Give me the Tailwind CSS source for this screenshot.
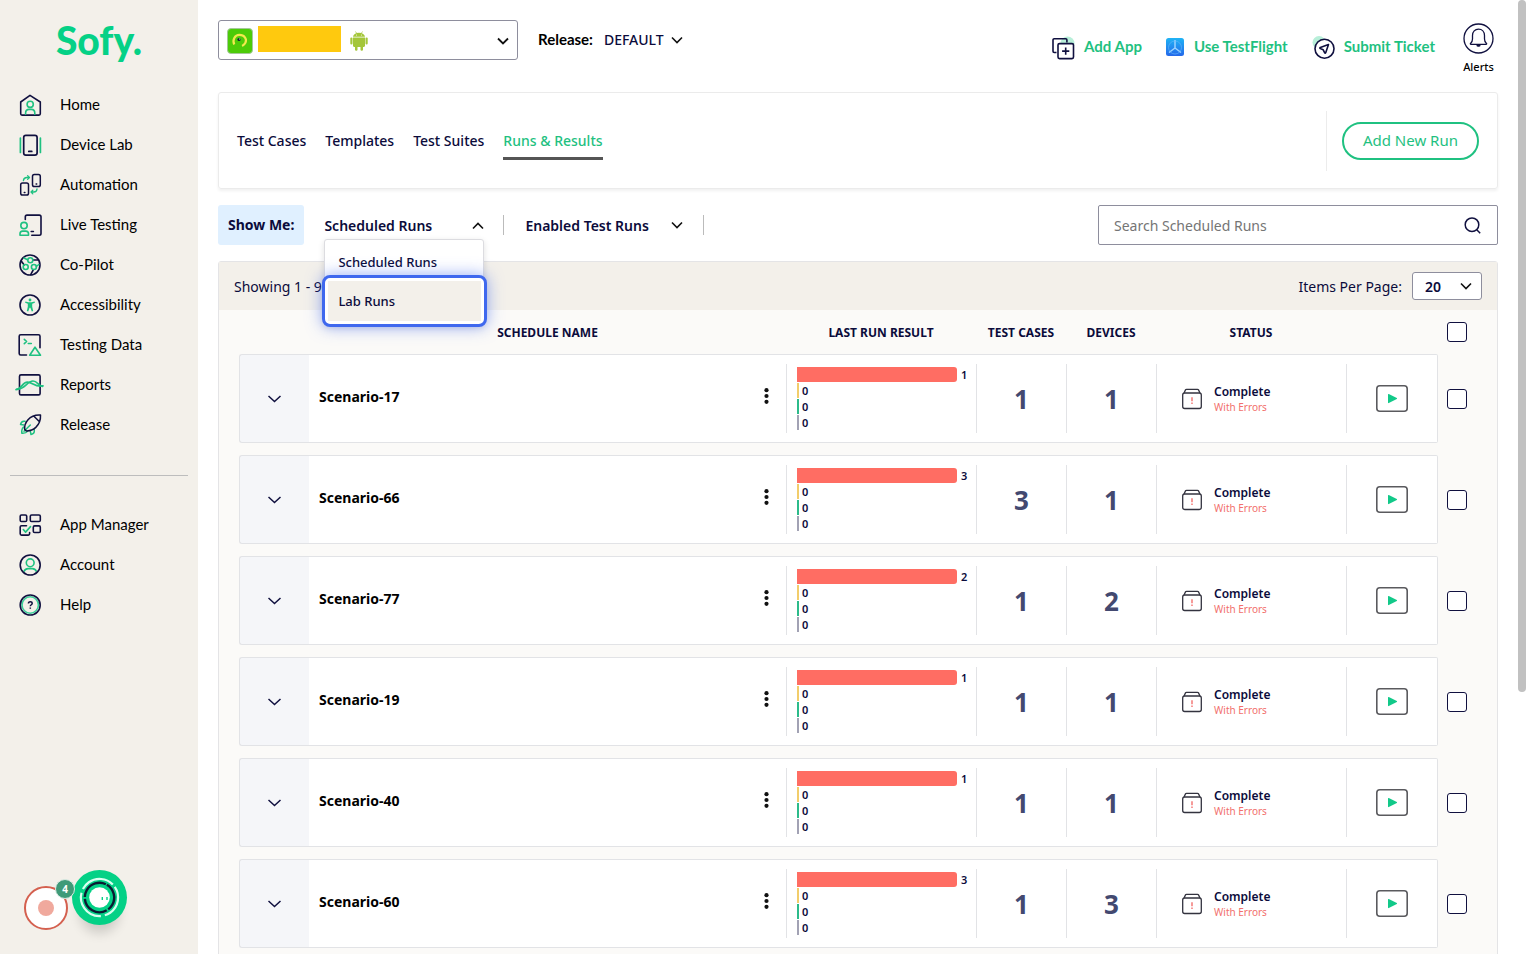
<!DOCTYPE html>
<html lang="en">
<head>
  <meta charset="UTF-8">
  <meta name="viewport" content="width=device-width, initial-scale=1.0">
  <title>Sofy - Runs &amp; Results</title>
  <script src="https://cdn.jsdelivr.net/npm/@tailwindcss/browser@4"></script>
</head>
<body class="flex h-screen overflow-hidden bg-white font-['Noto_Sans',sans-serif] text-sm text-[#0b0b3b]">

  <!-- Sidebar -->
  <aside class="relative w-[198px] shrink-0 bg-[#f3f0ea] font-['Lato',sans-serif] text-[15px] text-black">
    <a href="#" class="flex h-[85px] items-center justify-center pb-1 text-[39px] leading-none font-black text-[#04d186]">Sofy.</a>
    <nav>
      <a href="#" class="flex h-10 items-center gap-[15px] pl-[15px]">
        <svg class="size-[30px]" viewBox="0 0 30 30" fill="none" stroke="#10103f" stroke-width="1.6" stroke-linecap="round" stroke-linejoin="round"><path d="M15 5.3 5.7 12v11.8c0 .8.5 1.3 1.3 1.3h17c.8 0 1.3-.5 1.3-1.3V12z"/><g stroke="#1fc181"><circle cx="15.2" cy="14.3" r="3.1"/><path d="M10.6 24.3v-1.2c0-2.2 1.5-3.7 3.4-3.7h2.4c2 0 3.4 1.5 3.4 3.7v1.2"/></g></svg>
        <span>Home</span>
      </a>
      <a href="#" class="flex h-10 items-center gap-[15px] pl-[15px]">
        <svg class="size-[30px]" viewBox="0 0 30 30" fill="none" stroke="#10103f" stroke-width="1.7" stroke-linecap="round"><rect x="8.7" y="5.4" width="13.4" height="19.8" rx="2.2"/><path d="M13.8 21.4h3"/><path d="M5.4 8v14.500M25.4 8v14.500" stroke="#1fc181"/></svg>
        <span>Device Lab</span>
      </a>
      <a href="#" class="flex h-10 items-center gap-[15px] pl-[15px]">
        <svg class="size-[30px]" viewBox="0 0 30 30" fill="none" stroke="#10103f" stroke-width="1.5" stroke-linecap="round" stroke-linejoin="round"><rect x="5.7" y="12.9" width="7.8" height="12.2" rx="1.8"/><rect x="17.5" y="4.6" width="7.8" height="12" rx="1.8"/><path d="M9.300 22.5h.6M21.1 14h.6"/><g stroke="#1fc181" stroke-width="1.3"><path d="M8.4 10.6c.2-2 1.600-3.100 3.400-3.100h2.400M12.6 5.600l1.900 1.900-1.900 1.900M22 19c-.1 2-1.500 3-3.200 3h-2.600M17.8 20.2 16 22l1.800 1.900"/></g></svg>
        <span>Automation</span>
      </a>
      <a href="#" class="flex h-10 items-center gap-[15px] pl-[15px]">
        <svg class="size-[30px]" viewBox="0 0 30 30" fill="none" stroke="#10103f" stroke-width="1.6" stroke-linecap="round" stroke-linejoin="round"><path d="M10.3 9.500V6.800c0-1 .6-1.700 1.700-1.700h12.300c1 0 1.700.6 1.700 1.700v16.700c0 1-.6 1.700-1.700 1.700h-7.500M16.200 21.500h2.200"/><g stroke="#1fc181"><circle cx="9" cy="15.6" r="3.2"/><path d="M5 25.200v-1.400c0-1.600 1-2.700 2.600-2.700h3.200c1.600 0 2.700 1.100 2.700 2.700v1.400z"/></g></svg>
        <span>Live Testing</span>
      </a>
      <a href="#" class="flex h-10 items-center gap-[15px] pl-[15px]">
        <svg class="size-[30px]" viewBox="0 0 30 30" fill="none" stroke="#10103f" stroke-width="1.6" stroke-linecap="round"><circle cx="15" cy="15" r="10"/><path d="M18 10h5.500M6.600 11.500l2.600 3.500M18.200 20l-2.500 4.600"/><g stroke="#1fc181"><circle cx="15.3" cy="10.3" r="2.5"/><circle cx="10.7" cy="17" r="2.5"/><circle cx="18.9" cy="17" r="2.5"/><path d="M9 8l3.500 1.700M21.300 16.500l2.500-2"/></g></svg>
        <span>Co-Pilot</span>
      </a>
      <a href="#" class="flex h-10 items-center gap-[15px] pl-[15px]">
        <svg class="size-[30px]" viewBox="0 0 30 30"><circle cx="15" cy="15" r="10" fill="none" stroke="#10103f" stroke-width="1.6"/><g fill="#1fc181"><circle cx="15" cy="10" r="1.4"/><path d="M10.400 11.600 13.500 12.300h3l3.100-.7.3 1.200-2.700.9v3l1 4.300-1.400.4-1.400-3.700h-.8l-1.400 3.700-1.400-.4 1-4.300v-3l-2.700-.9z"/></g></svg>
        <span>Accessibility</span>
      </a>
      <a href="#" class="flex h-10 items-center gap-[15px] pl-[15px]">
        <svg class="size-[30px]" viewBox="0 0 30 30" fill="none" stroke="#10103f" stroke-width="1.6" stroke-linecap="round" stroke-linejoin="round"><path d="M11.500 25H5.700c-1 0-1.500-.6-1.500-1.500V6.200c0-1 .5-1.500 1.500-1.500h17.800c1 0 1.500.5 1.500 1.500v11.500"/><path d="M20 17.200 25.500 25.300H14.700zM9.300 9.300l2.300 2.200-2.300 2.200M13.300 13.500h3" stroke="#1fc181"/></svg>
        <span>Testing Data</span>
      </a>
      <a href="#" class="flex h-10 items-center gap-[15px] pl-[15px]">
        <svg class="size-[30px]" viewBox="0 0 30 30" fill="none" stroke="#10103f" stroke-width="1.6" stroke-linecap="round"><rect x="4.500" y="4.900" width="20.600" height="20" rx="1.500"/><g stroke="#1fc181" stroke-width="1.700"><path d="M1 19.600c5.500 0 6-7.400 11.500-7.400 5 0 8 5.600 15.500 3.600"/><path d="M2 19c7.500 1 10-8 16-8 4.500 0 5 4.500 9.500 5.300"/></g></svg>
        <span>Reports</span>
      </a>
      <a href="#" class="flex h-10 items-center gap-[15px] pl-[15px]">
        <svg class="size-[30px]" viewBox="0 0 30 30" fill="none" stroke-width="1.5" stroke-linecap="round" stroke-linejoin="round"><g stroke="#1fc181"><path d="M10 11.300c-2.300-.5-4 1-4.500 3.200l3.500.5M19.300 19.800c.3 2.300-1 4.200-3.300 4.700l-.6-3M8.500 17c-1.700 1.700-2 3.500-1.700 6.200 2.700.2 4.500-.2 5.700-1.800M15.300 15l-6.300 6.300"/></g><path d="M25.500 5c-5.500-.4-9.500 1.300-12.500 4.700-2.300 2.600-3.700 5.600-3.300 9.700l1.500 1.500c4.200.2 7-1.100 9.600-3.500C24 14.300 25.800 10.500 25.500 5zM19.200 6.500l4.800 4.800" stroke="#10103f"/></svg>
        <span>Release</span>
      </a>
      <hr class="mx-[10px] mt-[30px] mb-[29px] border-[#bdbdbd]">
      <a href="#" class="flex h-10 items-center gap-[15px] pl-[15px]">
        <svg class="size-[30px]" viewBox="0 0 30 30" fill="none" stroke="#10103f" stroke-width="1.6" stroke-linecap="round" stroke-linejoin="round"><rect x="5.200" y="5" width="6.500" height="6.500" rx="1.300"/><rect x="15.300" y="5" width="10" height="6.500" rx="1.300"/><rect x="18.300" y="15.900" width="7" height="6.600" rx="1.300"/><path d="M11.500 15.700h-5c-.8 0-1.300.5-1.300 1.300v6.800c0 .8.5 1.300 1.300 1.300h6.800c.8 0 1.300-.5 1.300-1.300v-1.300"/><path d="M8.300 19.500l2.300 2.600 4.900-5.500" stroke="#1fc181"/></svg>
        <span>App Manager</span>
      </a>
      <a href="#" class="flex h-10 items-center gap-[15px] pl-[15px]">
        <svg class="size-[30px]" viewBox="0 0 30 30" fill="none" stroke="#1fc181" stroke-width="1.6"><circle cx="15.200" cy="12.800" r="3.900"/><path d="M8.800 21.800c.8-2.100 2.200-3.200 4.200-3.200h4.400c2 0 3.400 1.100 4.200 3.200"/><circle cx="15.200" cy="15" r="10" stroke="#10103f"/></svg>
        <span>Account</span>
      </a>
      <a href="#" class="flex h-10 items-center gap-[15px] pl-[15px]">
        <svg class="size-[30px]" viewBox="0 0 30 30" fill="none" stroke-width="1.6"><circle cx="15.200" cy="15" r="8.200" stroke="#3ad09a"/><circle cx="15.200" cy="15" r="10" stroke="#10103f"/><path d="M13.400 13.500c0-1.100.8-1.800 1.900-1.800s1.900.7 1.900 1.700c0 1.400-1.900 1.300-1.900 2.800M15.300 17.500v1.300" stroke="#10103f" stroke-width="1.500"/></svg>
        <span>Help</span>
      </a>
    </nav>

    <!-- Floating widgets -->
    <button aria-label="Record" class="absolute bottom-6 left-6 flex size-11 items-center justify-center rounded-full border-2 border-[#d4604f] bg-white">
      <span class="size-4 rounded-full bg-[#f0a99d]"></span>
    </button>
    <button aria-label="Chat" class="absolute bottom-[29px] left-[72px] size-[55px] rounded-full bg-[#04d186] shadow-[0_16px_12px_-8px_rgba(0,0,0,0.16)]">
      <svg viewBox="0 0 55 55" fill="none"><circle cx="27.500" cy="27.500" r="18.600" stroke="#d8fff0" stroke-width="2.200" stroke-dasharray="35 4" transform="rotate(-35 27.500 27.500)"/><circle cx="27.500" cy="27.500" r="14.700" stroke="#0b1b33" stroke-width="2.400" stroke-dasharray="29 1.800" transform="rotate(-60 27.500 27.500)"/><circle cx="27.500" cy="27.500" r="10.300" fill="#fff"/><path d="M30.300 27v3M35 27v3" stroke="#04d186" stroke-width="1.400"/></svg>
    </button>
    <span class="absolute bottom-[55px] left-[55px] flex size-5 items-center justify-center rounded-full border border-[#d9e9e2] bg-[#3f9a78] font-['Noto_Sans',sans-serif] text-[10px] font-bold text-white">4</span>
  </aside>

  <main class="flex min-w-0 flex-1 flex-col px-5">
    <!-- Top bar -->
    <header class="flex h-[92px] shrink-0 items-start pt-5">
      <button aria-label="Select app" class="flex h-10 w-[300px] items-center rounded-[3px] border border-[#8e8e9d] px-2">
        <svg class="mt-0.5 size-[26px]" viewBox="0 0 26 26" fill="none"><rect x=".5" y=".5" width="25" height="25" rx="3.500" fill="#4ccb08" stroke="#a5c89a"/><path d="M7.200 16.500c-2-4.700.5-9.600 5.300-9.600 4.800 0 7.600 3.900 6 7.600-.8 1.700-2 2.700-3.400 3.400" stroke="#f3e94e" stroke-width="2.200"/><circle cx="12" cy="11.500" r="1.600" fill="#123"/><circle cx="12.700" cy="11" r=".6" fill="#fff"/></svg>
        <span class="mb-0.5 ml-[5px] h-[26px] w-[83px] bg-[#ffc90e]"></span>
        <svg class="mt-0.5 ml-[9px] h-5 w-[18px]" viewBox="0 0 18 20" fill="#a4c639"><path d="M3 6.500h12v8.300c0 .7-.5 1.200-1.200 1.200H4.200c-.7 0-1.200-.5-1.200-1.200zM3 5.800C3.200 3.500 5.500 1.800 9 1.800s5.800 1.700 6 4z"/><path d="M5.500.5l1.300 2M12.500.5l-1.300 2" stroke="#a4c639" stroke-width=".7"/><rect x=".3" y="6.500" width="2.200" height="7" rx="1.100"/><rect x="15.500" y="6.500" width="2.200" height="7" rx="1.100"/><rect x="5" y="13.500" width="2.500" height="6.300" rx="1.200"/><rect x="10.500" y="13.500" width="2.500" height="6.300" rx="1.200"/><circle cx="6.500" cy="4.100" r=".5" fill="#fff"/><circle cx="11.500" cy="4.100" r=".5" fill="#fff"/></svg>
        <svg class="mt-0.5 ml-auto size-3" viewBox="0 0 12 12" fill="none" stroke="#111" stroke-width="1.800"><path d="M1 3.500l5 5 5-5"/></svg>
      </button>
      <label for="release" class="ml-5 flex h-10 items-center font-['Lato',sans-serif] text-[15px] font-bold text-black">Release:</label>
      <div class="relative ml-[11px] flex h-10 items-center">
        <select id="release" class="appearance-none pr-[19px] font-medium"><option>DEFAULT</option></select>
        <svg class="pointer-events-none absolute right-0 size-3" viewBox="0 0 12 12" fill="none" stroke="#111" stroke-width="1.600"><path d="M1 3.500l5 5 5-5"/></svg>
      </div>

      <div class="mr-1 ml-auto flex items-center font-['Lato',sans-serif] text-[15px] font-bold text-[#1fc181]">
        <a href="#" class="flex items-center gap-[9px]">
          <svg class="size-6" viewBox="0 0 24 24" fill="none" stroke="#10103f" stroke-width="1.600" stroke-linejoin="round"><circle cx="16.500" cy="7.500" r="7" fill="#b8efd9" stroke="none"/><path d="M5.500 16.500H3.200c-.7 0-1.200-.5-1.200-1.200V4c0-.7.5-1.200 1.200-1.200h11.500c.7 0 1.200.5 1.200 1.200v2.500"/><rect x="7" y="7.600" width="15.500" height="15" rx="1.500" fill="#fff"/><path d="M14.700 11.500v7.200M11.100 15.100h7.200"/></svg>
          <span class="pb-0.5">Add App</span></a>
        <a href="#" class="ml-6 flex items-center gap-[10px]">
          <svg class="size-[18px]" viewBox="0 0 18 18"><defs><linearGradient id="tf" x1="0" y1="0" x2="0" y2="1"><stop stop-color="#20b4f5"/><stop offset="1" stop-color="#2468ea"/></linearGradient></defs><rect width="18" height="18" rx="2.500" fill="url(#tf)"/><path d="M9 2v8M9 10l-6 4.500M9 10l6 4.500" stroke="#9bd2ff" stroke-width="1.500"/><circle cx="9" cy="9.500" r="6.500" fill="none" stroke="#67b8fb" stroke-width=".6"/></svg>
          <span class="pb-0.5">Use TestFlight</span></a>
        <a href="#" class="ml-6 flex items-center gap-2">
          <svg class="size-6" viewBox="0 0 24 24" fill="none" stroke="#10103f" stroke-width="1.600" stroke-linejoin="round"><circle cx="7" cy="6.500" r="6.500" fill="#b8efd9" stroke="none"/><circle cx="12.500" cy="12.700" r="9.500" fill="#fff"/><path d="M16.500 8.500 8.300 11.500c-.6.300-.6.800 0 1.100l2.900 1.200 1.400 2.900c.3.600.8.600 1.100 0z"/></svg>
          <span class="pb-0.5">Submit Ticket</span></a>
        <a href="#" class="ml-7 flex flex-col items-center font-['Noto_Sans',sans-serif] text-[11px] leading-4 font-medium text-black">
          <svg class="mt-[3px] mb-[5px] size-[31px]" viewBox="0 0 31 31" fill="none" stroke="#10103f" stroke-width="1.300" stroke-linejoin="round"><circle cx="15.500" cy="15.500" r="14.500"/><path d="M7.500 20.500c1.600-1.300 2-2.500 2-4.500v-3.500c0-3.800 2.500-6.400 6-6.400s6 2.600 6 6.400V16c0 2 .4 3.200 2 4.500.3.400.1.900-.4.900H7.900c-.5 0-.7-.5-.4-.9z"/><path d="M14 22c0 1.600 3 1.600 3 0z" fill="#10103f"/></svg>
          Alerts</a>
      </div>
    </header>

    <!-- Tabs -->
    <section class="flex h-[97px] shrink-0 items-center justify-between rounded-[3px] border border-[#ebebeb] px-[18px] shadow-[0_2px_3px_rgba(0,0,0,0.06)]">
      <nav class="flex gap-[19px] font-medium">
        <a href="#" class="border-b-3 border-transparent pt-[9px] pb-1.5">Test Cases</a>
        <a href="#" class="border-b-3 border-transparent pt-[9px] pb-1.5">Templates</a>
        <a href="#" class="border-b-3 border-transparent pt-[9px] pb-1.5">Test Suites</a>
        <a href="#" class="border-b-3 border-[#555] pt-[9px] pb-1.5 text-[#1fc181]">Runs &amp; Results</a>
      </nav>
      <div class="flex h-[60px] items-center border-l border-[#ececec] pl-[15px]">
        <button class="h-[38px] rounded-full border-2 border-[#1fc181] px-[19px] pt-px text-[15px] text-[#1fc181]">Add New Run</button>
      </div>
    </section>

    <!-- Filters -->
    <section class="mt-4 flex h-10 shrink-0 items-center">
      <span class="flex h-10 items-center rounded-[3px] bg-[#e0f0ff] px-[10px] font-bold">Show Me:</span>
      <div class="relative ml-5 w-40">
        <button aria-expanded="true" class="flex w-full items-center justify-between pt-0.5 font-semibold">Scheduled Runs
          <svg class="size-3" viewBox="0 0 12 12" fill="none" stroke="#111" stroke-width="1.600"><path d="M1 8.500l5-5 5 5"/></svg>
        </button>
        <ul class="absolute top-[25px] left-0 z-10 h-[86px] w-40 rounded-[3px] border border-[#dcdce0] bg-white text-[13px] font-medium shadow-[0_2px_6px_rgba(0,0,0,0.12)]">
          <li><a href="#" class="flex h-[45px] items-center pl-[13px]">Scheduled Runs</a></li>
          <li class="absolute top-[35px] -left-[3px] h-[52px] w-[165px] rounded-lg border-3 border-[#3f68ee] bg-white p-[3px] shadow-[0_0_16px_rgba(63,104,238,0.55)]"><a href="#" class="flex h-full items-center bg-[#f3f0ea] pl-[10px]">Lab Runs</a></li>
        </ul>
      </div>
      <div class="ml-[19px] h-5 w-px bg-[#bbb]"></div>
      <div class="relative ml-[21px] flex w-[158px] items-center">
        <select aria-label="Run state" class="w-full appearance-none pt-0.5 font-semibold"><option>Enabled Test Runs</option></select>
        <svg class="pointer-events-none absolute right-0 size-3" viewBox="0 0 12 12" fill="none" stroke="#111" stroke-width="1.600"><path d="M1 3.500l5 5 5-5"/></svg>
      </div>
      <div class="ml-5 h-5 w-px bg-[#bbb]"></div>
      <div class="relative ml-auto w-[400px]">
        <input type="search" aria-label="Search Scheduled Runs" placeholder="Search Scheduled Runs" class="h-10 w-full rounded-[2px] border border-[#8e8e9d] pr-10 pl-[15px] placeholder:text-[#757575]">
        <svg class="absolute top-3 right-[17px] size-[17px]" viewBox="0 0 17 17" fill="none" stroke="#10103f" stroke-width="1.500"><circle cx="8" cy="7.700" r="6.800"/><path d="M12.500 12.500l3.700 3.700"/></svg>
      </div>
    </section>

    <!-- Runs -->
    <section class="mt-4 grow rounded-t-[3px] border border-[#e4e4e6] bg-[#fbfaf8]">
      <div class="flex h-12 items-center justify-between bg-[#f3f0ea] px-[15px]">
        <span class="pt-0.5">Showing 1 - 9 of 9</span>
        <div class="flex items-center gap-[10px]">
          <label for="per-page" class="pt-0.5">Items Per Page:</label>
          <div class="relative flex items-center">
            <select id="per-page" class="h-7 w-[70px] appearance-none rounded-[3px] border border-[#8e8e9d] bg-white pt-0.5 pl-3 font-semibold"><option>20</option></select>
            <svg class="pointer-events-none absolute right-[10px] size-3" viewBox="0 0 12 12" fill="none" stroke="#111" stroke-width="1.600"><path d="M1 3.500l5 5 5-5"/></svg>
          </div>
        </div>
      </div>
      <div class="pr-[19px] pl-5">
        <table class="w-full table-fixed border-separate border-spacing-x-0 border-spacing-y-3">
          <colgroup>
            <col class="w-[70px]"><col><col class="w-[190px]"><col class="w-[90px]"><col class="w-[90px]"><col class="w-[190px]"><col class="w-[92px]"><col class="w-10">
          </colgroup>
          <thead>
            <tr class="h-5 text-[12px] leading-[18px]">
              <th></th>
              <th class="p-0 pt-0.5 font-bold">SCHEDULE NAME</th>
              <th class="p-0 pt-0.5 font-bold">LAST RUN RESULT</th>
              <th class="p-0 pt-0.5 font-bold">TEST CASES</th>
              <th class="p-0 pt-0.5 font-bold">DEVICES</th>
              <th class="p-0 pt-0.5 font-bold">STATUS</th>
              <th></th>
              <th class="p-0 pl-[9px]"><input type="checkbox" aria-label="Select all" class="block size-5 appearance-none rounded-[3px] border border-[#10103f] bg-white"></th>
            </tr>
          </thead>
          <tbody id="runs"></tbody>
        </table>
      </div>
    </section>
  </main>

  <!-- Scrollbar -->
  <div class="w-2 shrink-0">
    <div class="h-[692px] rounded-full bg-[#c1c1c1]"></div>
  </div>

  <script>
    const runs = [
      { name: 'Scenario-17', failed: 1, cases: 1, devices: 1 },
      { name: 'Scenario-66', failed: 3, cases: 3, devices: 1 },
      { name: 'Scenario-77', failed: 2, cases: 1, devices: 2 },
      { name: 'Scenario-19', failed: 1, cases: 1, devices: 1 },
      { name: 'Scenario-40', failed: 1, cases: 1, devices: 1 },
      { name: 'Scenario-60', failed: 3, cases: 1, devices: 3 },
    ];

    document.getElementById('runs').innerHTML = runs.map((run) => `
      <tr class="h-[89px]">
        <td class="rounded-l-[3px] border-y border-l border-[#e2e3e6] bg-[#f5f6f9] p-0">
          <button aria-label="Expand" class="ml-7 block"><svg class="size-[14px]" viewBox="0 0 14 14" fill="none" stroke="#10103f" stroke-width="1.500"><path d="M.5 4l6 5.500 6-5.500"/></svg></button>
        </td>
        <td class="border-y border-[#e2e3e6] bg-white p-0">
          <div class="flex items-center justify-between pr-[17px] pb-1 pl-[10px]">
            <span class="font-bold text-black">${run.name}</span>
            <button aria-label="More" class="pb-0.5"><svg class="h-4 w-[5px]" viewBox="0 0 5 16" fill="#111"><circle cx="2.500" cy="2.200" r="2.100"/><circle cx="2.500" cy="8" r="2.100"/><circle cx="2.500" cy="13.800" r="2.100"/></svg></button>
          </div>
        </td>
        <td class="border-y border-[#e2e3e6] bg-white p-0">
          <div class="flex h-[69px] flex-col gap-px border-l border-[#e2e3e6] pt-[3px] pl-[10px] text-[11px] leading-[15px] font-semibold">
            <div class="flex h-[15px] items-center gap-1"><span class="h-[15px] w-40 rounded-r-[3px] bg-[#ff6d63]"></span>${run.failed}</div>
            <div class="flex h-[15px] items-center gap-[3px]"><span class="h-[15px] w-0.5 bg-[#f2cd6b]"></span>0</div>
            <div class="flex h-[15px] items-center gap-[3px]"><span class="h-[15px] w-0.5 bg-[#2cbb8a]"></span>0</div>
            <div class="flex h-[15px] items-center gap-[3px]"><span class="h-[15px] w-0.5 bg-[#a2a2b4]"></span>0</div>
          </div>
        </td>
        <td class="border-y border-[#e2e3e6] bg-white p-0">
          <div class="flex h-[69px] items-center justify-center border-l border-[#e2e3e6] pt-[2px] text-[26px] font-bold text-[#434970]">${run.cases}</div>
        </td>
        <td class="border-y border-[#e2e3e6] bg-white p-0">
          <div class="flex h-[69px] items-center justify-center border-l border-[#e2e3e6] pt-[2px] text-[26px] font-bold text-[#434970]">${run.devices}</div>
        </td>
        <td class="border-y border-[#e2e3e6] bg-white p-0">
          <div class="flex h-[69px] items-center gap-[11px] border-l border-[#e2e3e6] pl-6">
            <svg class="size-[22px]" viewBox="0 0 22 22" fill="none" stroke="#33333f" stroke-width="1.300"><rect x="1.700" y="5" width="18.600" height="15.500" rx="2"/><path d="M3 5 4.500 1.900c.2-.4.500-.6 1-.6h11c.5 0 .8.200 1 .6L19 5"/><path d="M11 9.200v4M11 14.500v1.500" stroke="#f2706d" stroke-width="1.400"/></svg>
            <div class="pt-px">
              <div class="text-[12px] leading-4 font-semibold">Complete</div>
              <div class="text-[10px] leading-[15px] text-[#f2706d]">With Errors</div>
            </div>
          </div>
        </td>
        <td class="rounded-r-[2px] border-y border-r border-[#e2e3e6] bg-white p-0">
          <div class="flex h-[69px] items-center justify-center border-l border-[#e2e3e6]">
            <button aria-label="Play"><svg class="h-[27px] w-8" viewBox="0 0 32 27" fill="none"><rect x=".8" y=".8" width="30.400" height="25.400" rx="3" stroke="#5a5a5e" stroke-width="1.600"/><path d="M12 9.500c0-.5.400-.7.800-.5l8 4c.4.300.4.700 0 .9l-8 4.200c-.4.200-.8 0-.8-.5z" fill="#12c989"/></svg></button>
          </div>
        </td>
        <td class="p-0 pl-[9px]"><input type="checkbox" aria-label="Select ${run.name}" class="block size-5 appearance-none rounded-[3px] border border-[#10103f] bg-white"></td>
      </tr>`).join('');
  </script>
</body>
</html>
